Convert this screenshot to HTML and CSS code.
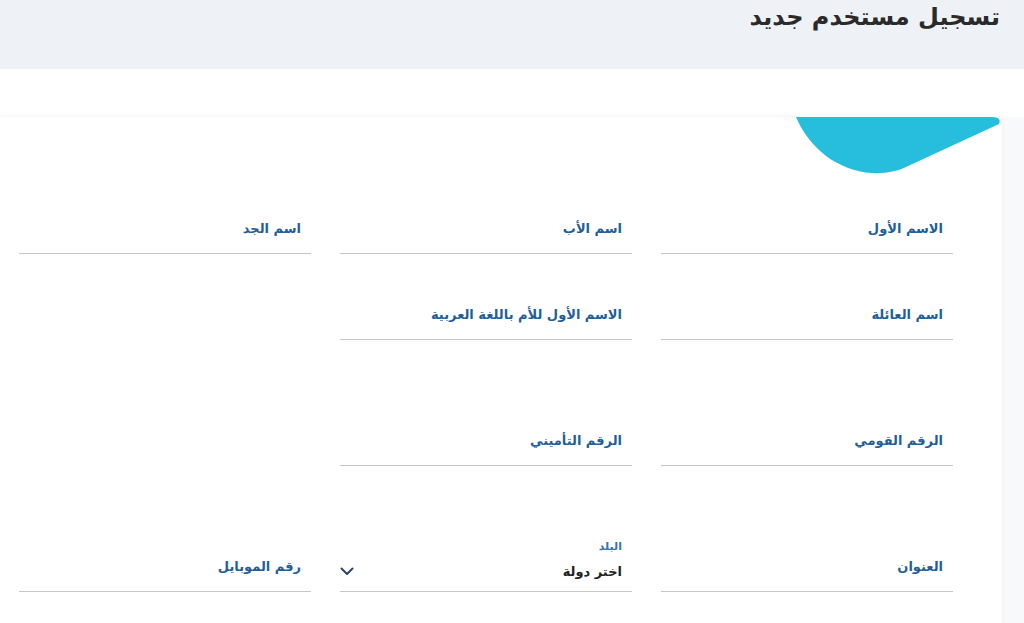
FILE: index.html
```html
<!DOCTYPE html>
<html lang="ar" dir="rtl">
<head>
    <meta charset="UTF-8">
    <meta name="viewport" content="width=device-width, initial-scale=1.0">
    <title>تسجيل مستخدم جديد</title>
    <link rel="stylesheet" href="styles.css">
</head>
<body>
    <header class="page-head">
        <h1>تسجيل مستخدم جديد</h1>
    </header>

    <main class="page-body">
        <div class="card">
            <svg class="card-shape" width="206" height="57" viewBox="0 0 206 57" aria-hidden="true">
                <path d="M0 0 H196 Q206 0 203 7 L110 50 Q96 57 76 56 C42 54 13 31 0 0 Z" fill="#27bddd"/>
            </svg>

            <div class="form-group">
                <div class="field"><label>الاسم الأول</label></div>
                <div class="field"><label>اسم الأب</label></div>
                <div class="field"><label>اسم الجد</label></div>
                <div class="field"><label>اسم العائلة</label></div>
                <div class="field"><label>الاسم الأول للأم باللغة العربية</label></div>
            </div>

            <div class="form-group">
                <div class="field"><label>الرقم القومي</label></div>
                <div class="field"><label>الرقم التأميني</label></div>
            </div>

            <div class="form-group">
                <div class="field"><label>العنوان</label></div>
                <div class="field field-select">
                    <span class="float-label">البلد</span>
                    <span class="select-value">اختر دولة</span>
                    <svg class="chevron" width="14" height="9" viewBox="0 0 14 9" aria-hidden="true">
                        <path d="M1.5 1.5 L7 7 L12.5 1.5" fill="none" stroke="#2b4565" stroke-width="2" stroke-linecap="round" stroke-linejoin="round"/>
                    </svg>
                </div>
                <div class="field"><label>رقم الموبايل</label></div>
            </div>
        </div>
    </main>
</body>
</html>
```

FILE: styles.css
```css
body { margin: 0; font-family: "DejaVu Sans", "Noto Sans", sans-serif; background: #fff; color: #222; }

.page-head { height: 69px; background: #eef1f5; padding: 0 24px; box-sizing: border-box; }
.page-head h1 { margin: 0; font-size: 24px; line-height: 35px; font-weight: bold; color: #2a2a2a; }

.page-body { padding-top: 48px; padding-right: 22px; background: linear-gradient(#fff 48px, #f8f9fa 48px); }
.card { position: relative; background: #fff; padding: 96px 49px 60px 19px; box-shadow: 0 -1px 4px rgba(0, 0, 0, 0.05); min-height: 460px; box-sizing: border-box; }
.card-shape { position: absolute; top: 0; right: 0; }

.form-group { display: grid; grid-template-columns: repeat(3, 292px); column-gap: 29px; row-gap: 45px; }
.form-group + .form-group { margin-top: 85px; }

.field { position: relative; border-bottom: 1px solid #c6c6c6; padding: 6px 10px 14px; height: 20px; }
.field label { display: block; font-size: 13px; line-height: 20px; font-weight: bold; color: #1f5f99; }

.field-select { display: flex; justify-content: space-between; align-items: center; padding: 11px 10px 9px 0; }
.float-label { position: absolute; right: 10px; top: -11px; font-size: 11px; line-height: 14px; color: #3573b3; font-weight: bold; }
.select-value { font-size: 13px; line-height: 20px; font-weight: bold; color: #222; }
.chevron { display: block; margin-top: -2px; }
```
